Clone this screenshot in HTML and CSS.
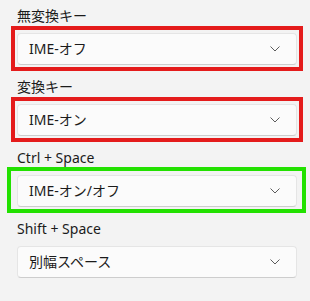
FILE: index.html
```html
<!DOCTYPE html>
<html lang="ja">
<head>
    <meta charset="UTF-8">
    <meta name="viewport" content="width=device-width, initial-scale=1.0">
    <title>キーの割り当て</title>
    <link rel="stylesheet" href="styles.css">
</head>
<body>

<div class="settings">
    <div class="setting">
        <label class="setting-label">無変換キー</label>
        <div class="combo mark-red">
            <span class="combo-value">IME-オフ</span>
            <svg class="chevron" width="10" height="6" viewBox="0 0 10 6"><path d="M0.5 0.5 L5 5 L9.5 0.5" fill="none" stroke="#5c5c5c" stroke-width="1"/></svg>
        </div>
    </div>
    <div class="setting">
        <label class="setting-label">変換キー</label>
        <div class="combo mark-red">
            <span class="combo-value">IME-オン</span>
            <svg class="chevron" width="10" height="6" viewBox="0 0 10 6"><path d="M0.5 0.5 L5 5 L9.5 0.5" fill="none" stroke="#5c5c5c" stroke-width="1"/></svg>
        </div>
    </div>
    <div class="setting">
        <label class="setting-label">Ctrl + Space</label>
        <div class="combo mark-green">
            <span class="combo-value">IME-オン/オフ</span>
            <svg class="chevron" width="10" height="6" viewBox="0 0 10 6"><path d="M0.5 0.5 L5 5 L9.5 0.5" fill="none" stroke="#5c5c5c" stroke-width="1"/></svg>
        </div>
    </div>
    <div class="setting">
        <label class="setting-label">Shift + Space</label>
        <div class="combo">
            <span class="combo-value">別幅スペース</span>
            <svg class="chevron" width="10" height="6" viewBox="0 0 10 6"><path d="M0.5 0.5 L5 5 L9.5 0.5" fill="none" stroke="#5c5c5c" stroke-width="1"/></svg>
        </div>
    </div>
</div>

</body>
</html>
```

FILE: styles.css
```css
body {
    margin: 0;
    background-color: #f3f3f3;
    color: #1b1b1b;
    font-family: "Noto Sans", "Noto Sans CJK JP", sans-serif;
    font-size: 14px;
}
.settings {
    display: flex;
    flex-direction: column;
    gap: 12px;
    padding: 6px 13px 0 17px;
}
.setting {
    display: flex;
    flex-direction: column;
    gap: 7px;
}
.setting-label {
    line-height: 20px;
}
.combo {
    position: relative;
    box-sizing: border-box;
    height: 32px;
    display: flex;
    align-items: center;
    justify-content: space-between;
    padding: 0 16px 0 11px;
    background-color: #fbfbfb;
    border: 1px solid #e5e5e5;
    border-bottom-color: #cdcdcd;
    border-radius: 4px;
}
.combo-value {
    line-height: 20px;
}
/* annotation frames drawn over the screenshot */
.mark-red::after,
.mark-green::after {
    content: "";
    position: absolute;
    border: 4px solid;
}
.mark-red::after {
    border-color: #e41b1b;
    inset: -8px -7px -7px -7px;
}
.mark-green::after {
    border-color: #22e100;
    inset: -9px -10px -7px -11px;
}
```
